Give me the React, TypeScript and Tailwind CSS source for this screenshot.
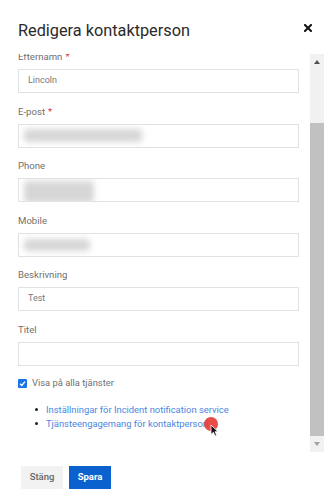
import type { ReactNode } from 'react';

function Field({ label, required, children }: { label: string; required?: boolean; children?: ReactNode }) {
  return (
    <div className="pb-[11.5px]">
      <div className="h-[14px] leading-[14px] text-[9.6px] text-[#6f6f6f]">
        {label}
        {required && <span className="ml-[3px] text-[#d9363e]">*</span>}
      </div>
      <div className="mt-[5px] h-[24px] w-[281px] border border-[#dfe1e5] bg-white relative overflow-hidden flex items-center pl-[9px] text-[9px] text-[#777]">
        {children}
      </div>
    </div>
  );
}

function Blur({ w, h, top }: { w: number; h: number; top: number }) {
  return (
    <div
      className="absolute left-[5px] bg-[#d6d6d6] rounded-sm blur-[3px]"
      style={{ width: w, height: h, top }}
    />
  );
}

export default function App() {
  return (
    <div className="relative w-[328px] h-[502px] bg-white overflow-hidden" style={{ fontFamily: 'Roboto, "Liberation Sans", sans-serif' }}>
      <div className="h-[54px] flex items-start justify-between pl-[18px] pr-[16px]">
        <h1 className="pt-[21px] text-[16.3px] leading-[20px] text-[#2a2a2a]">Redigera kontaktperson</h1>
        <svg className="mt-[24px]" width="8" height="8" viewBox="0 0 8 8">
          <path d="M1 1 L7 7 M7 1 L1 7" stroke="#111" strokeWidth="2" strokeLinecap="square" />
        </svg>
      </div>

      <div className="flex h-[398px]">
        <div className="flex-1 overflow-hidden pl-[18px]">
          <div className="-mt-[4px]">
            <Field label="Efternamn" required>Lincoln</Field>
            <Field label="E-post" required>
              <Blur w={118} h={13} top={4} />
            </Field>
            <Field label="Phone">
              <Blur w={70} h={22} top={2} />
            </Field>
            <Field label="Mobile">
              <Blur w={66} h={12} top={5} />
            </Field>
            <Field label="Beskrivning">Test</Field>
            <Field label="Titel" />

            <div className="flex items-center h-[13px]">
              <div className="w-[9px] h-[9px] rounded-[1px] bg-[#1a73e8] flex items-center justify-center">
                <svg width="7" height="7" viewBox="0 0 8 8">
                  <path d="M1.2 4.2 L3.2 6.2 L6.8 1.8" stroke="#fff" strokeWidth="1.6" fill="none" />
                </svg>
              </div>
              <span className="ml-[5px] text-[9.4px] text-[#6f6f6f]">Visa på alla tjänster</span>
            </div>

            <div className="mt-[12.5px] pl-[17px] text-[9.4px] leading-[14px] text-[#4a86e0]">
              <div className="flex items-center">
                <span className="w-[3px] h-[3px] rounded-full bg-[#222] mr-[8px]" />
                Inställningar för Incident notification service
              </div>
              <div className="flex items-center">
                <span className="w-[3px] h-[3px] rounded-full bg-[#222] mr-[8px]" />
                Tjänsteengagemang för kontaktperson
              </div>
            </div>
          </div>
        </div>

        <div className="w-[14px] mr-[4px] ml-[11px] bg-[#f1f1f1] flex flex-col">
          <div className="h-[16px] flex items-center justify-center">
            <svg width="6" height="4" viewBox="0 0 6 4"><path d="M0 4 L3 0 L6 4 Z" fill="#505050" /></svg>
          </div>
          <div className="h-[53px]" />
          <div className="h-[313px] bg-[#c1c1c1]" />
          <div className="h-[16px] flex items-center justify-center">
            <svg width="6" height="4" viewBox="0 0 6 4"><path d="M0 0 L6 0 L3 4 Z" fill="#a3a3a3" /></svg>
          </div>
        </div>
      </div>

      <div className="flex gap-[6px] pl-[21px] pt-[14px]">
        <button type="button" className="w-[42px] h-[23px] bg-[#f2f2f2] text-[9.5px] font-medium text-[#666]">Stäng</button>
        <button type="button" className="w-[42px] h-[23px] bg-[#0b62cf] text-[9.5px] font-bold text-white">Spara</button>
      </div>

      {/* click indicator from the screen recording */}
      <div className="absolute left-[204px] top-[417px] w-[14px] h-[14px] rounded-full bg-[#e53935] opacity-90" />
      <svg className="absolute left-[210px] top-[424px]" width="9" height="13" viewBox="0 0 9 13">
        <path d="M1 1 L1 10.5 L3.4 8.3 L5 12 L6.6 11.3 L5 7.7 L8 7.7 Z" fill="#111" stroke="#fff" strokeWidth="0.8" />
      </svg>
    </div>
  );
}
